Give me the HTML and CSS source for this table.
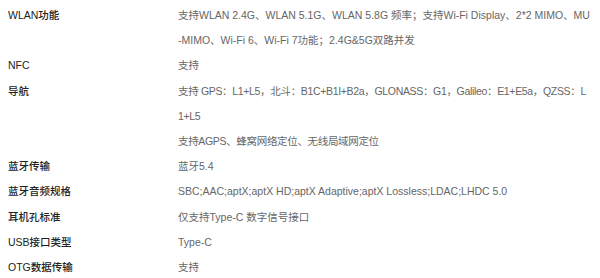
FILE: index.html
```html
<!DOCTYPE html>
<html lang="zh">
<head>
<meta charset="utf-8">
<link rel="stylesheet" href="styles.css">
</head>
<body>
<div class="specs">
  <div class="row"><div class="label">WLAN功能</div><div class="value">支持WLAN 2.4G、WLAN 5.1G、WLAN 5.8G 频率；支持Wi-Fi Display、2*2 MIMO、MU-MIMO、Wi-Fi 6、Wi-Fi 7功能；2.4G&amp;5G双路并发</div></div>
  <div class="row"><div class="label">NFC</div><div class="value">支持</div></div>
  <div class="row"><div class="label">导航</div><div class="value tight">支持 GPS：L1+L5，北斗：B1C+B1I+B2a，GLONASS：G1，Galileo：E1+E5a，QZSS：L1+L5<br>支持AGPS、蜂窝网络定位、无线局域网定位</div></div>
  <div class="row"><div class="label">蓝牙传输</div><div class="value">蓝牙5.4</div></div>
  <div class="row"><div class="label">蓝牙音频规格</div><div class="value">SBC;AAC;aptX;aptX HD;aptX Adaptive;aptX Lossless;LDAC;LHDC 5.0</div></div>
  <div class="row"><div class="label">耳机孔标准</div><div class="value">仅支持Type-C 数字信号接口</div></div>
  <div class="row"><div class="label">USB接口类型</div><div class="value">Type-C</div></div>
  <div class="row"><div class="label">OTG数据传输</div><div class="value">支持</div></div>
</div>
</body>
</html>
```
FILE: styles.css
```css
html, body {
  margin: 0;
  padding: 0;
  background: #fff;
}
body {
  padding: 3px 8px 0 8px;
  font-family: "Liberation Sans", "Noto Sans CJK SC", sans-serif;
  font-size: 10.5px;
  line-height: 25.2px;
}
.specs {
  display: flex;
  flex-direction: column;
}
.row {
  display: grid;
  grid-template-columns: 170px 412px;
}
.label {
  color: #222;
  font-weight: 500;
}
.value {
  color: #666;
  word-break: break-all;
}
.value.tight {
  letter-spacing: -0.33px;
}
```
